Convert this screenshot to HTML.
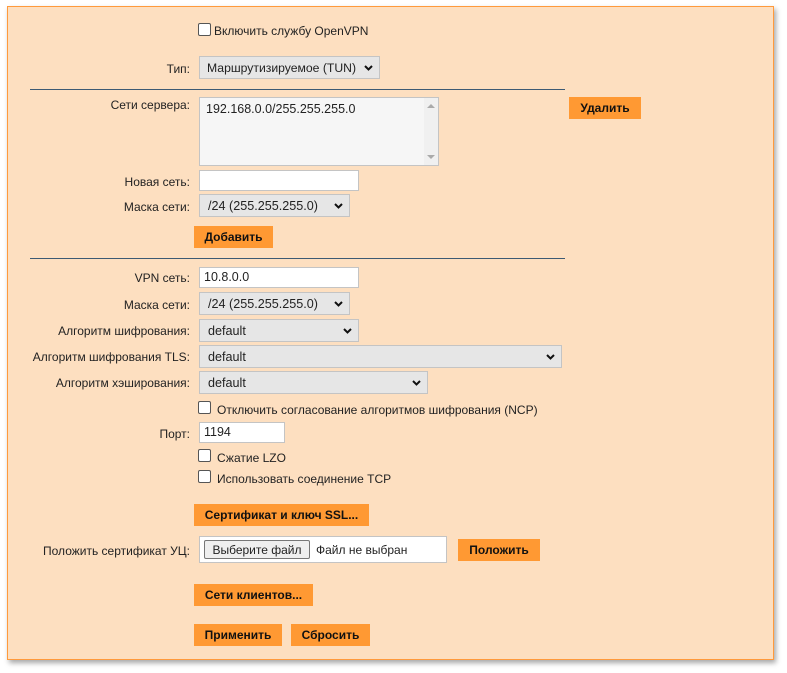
<!DOCTYPE html>
<html><head><meta charset="utf-8"><style>
body{margin:0;background:#fff;width:787px;height:673px;position:relative;font-family:"Liberation Sans",sans-serif;font-size:12px;color:#222;overflow:hidden}
.panel{position:absolute;left:7px;top:6px;width:765px;height:652px;background:#fddfc0;border:1px solid #ff9a3c;box-shadow:2px 3px 5px rgba(0,0,0,.35)}
.a{position:absolute}
.lbl{position:absolute;right:597px;text-align:right;white-space:nowrap;line-height:14px}
.btn{position:absolute;background:#ff9933;font-weight:bold;color:#111;text-align:center;line-height:23px;height:22px;font-size:12px}
.sel{position:absolute;background:#e6e6e6;border:1px solid #c4c4c4;box-sizing:border-box;padding-left:8px;line-height:22px;font-size:12.6px;white-space:nowrap}
.sel svg{position:absolute;right:6px;top:8px}
.inp{position:absolute;background:#fff;border:1px solid #c4c4c4;box-sizing:border-box;padding-left:4px;line-height:19px}
.cb{position:absolute;width:11px;height:11px;border:1px solid #555;border-radius:2px;background:#fff}
hr{position:absolute;left:30px;width:535px;margin:0;border:0;border-top:1px solid #3d5a73}
</style></head><body>
<div class="panel"></div>
<div class="cb" style="left:198px;top:23px"></div><div class="a" style="left:214px;top:24px">Включить службу OpenVPN</div>
<div class="lbl" style="top:62px">Тип:</div>
<div class="sel" style="left:199px;top:56px;width:181px;height:23px;font-size:12.2px;padding-left:7px">Маршрутизируемое (TUN)<svg width="9" height="6"><path d="M1 1l3.5 3.5L8 1" stroke="#111" stroke-width="2" fill="none"/></svg></div>
<hr style="top:89px">
<div class="lbl" style="top:98px">Сети сервера:</div>
<div class="a" style="left:199px;top:97px;width:240px;height:69px;background:#f6f6f6;border:1px solid #c4c4c4;box-sizing:border-box"><div class="a" style="left:6px;top:4px;font-size:12.5px">192.168.0.0/255.255.255.0</div><div class="a" style="right:0;top:0;width:14px;height:67px;background:#f0f0f0"></div><div class="a" style="right:3px;top:6px;border:4px solid transparent;border-bottom-color:#aaa;border-top:0"></div><div class="a" style="right:3px;bottom:6px;border:4px solid transparent;border-top-color:#aaa;border-bottom:0"></div></div>
<div class="btn" style="left:569px;top:97px;width:72px">Удалить</div>
<div class="lbl" style="top:175px">Новая сеть:</div>
<div class="inp" style="left:199px;top:170px;width:160px;height:21px"></div>
<div class="lbl" style="top:200px">Маска сети:</div>
<div class="sel" style="left:199px;top:194px;width:151px;height:23px">/24 (255.255.255.0)<svg width="9" height="6"><path d="M1 1l3.5 3.5L8 1" stroke="#111" stroke-width="2" fill="none"/></svg></div>
<div class="btn" style="left:194px;top:226px;width:79px">Добавить</div>
<hr style="top:258px">
<div class="lbl" style="top:271px">VPN сеть:</div>
<div class="inp" style="left:199px;top:267px;width:160px;height:21px;font-size:12.5px">10.8.0.0</div>
<div class="lbl" style="top:298px">Маска сети:</div>
<div class="sel" style="left:199px;top:292px;width:151px;height:23px">/24 (255.255.255.0)<svg width="9" height="6"><path d="M1 1l3.5 3.5L8 1" stroke="#111" stroke-width="2" fill="none"/></svg></div>
<div class="lbl" style="top:324px">Алгоритм шифрования:</div>
<div class="sel" style="left:199px;top:319px;width:160px;height:23px">default<svg width="9" height="6"><path d="M1 1l3.5 3.5L8 1" stroke="#111" stroke-width="2" fill="none"/></svg></div>
<div class="lbl" style="top:350px">Алгоритм шифрования TLS:</div>
<div class="sel" style="left:199px;top:345px;width:363px;height:23px">default<svg width="9" height="6"><path d="M1 1l3.5 3.5L8 1" stroke="#111" stroke-width="2" fill="none"/></svg></div>
<div class="lbl" style="top:376px">Алгоритм хэширования:</div>
<div class="sel" style="left:199px;top:371px;width:229px;height:23px">default<svg width="9" height="6"><path d="M1 1l3.5 3.5L8 1" stroke="#111" stroke-width="2" fill="none"/></svg></div>
<div class="cb" style="left:198px;top:401px"></div><div class="a" style="left:217px;top:403px">Отключить согласование алгоритмов шифрования (NCP)</div>
<div class="lbl" style="top:427px">Порт:</div>
<div class="inp" style="left:199px;top:422px;width:86px;height:21px;font-size:12.5px">1194</div>
<div class="cb" style="left:198px;top:449px"></div><div class="a" style="left:217px;top:451px">Сжатие LZO</div>
<div class="cb" style="left:198px;top:470px"></div><div class="a" style="left:217px;top:472px">Использовать соединение TCP</div>
<div class="btn" style="left:194px;top:504px;width:175px">Сертификат и ключ SSL...</div>
<div class="lbl" style="top:544px">Положить сертификат УЦ:</div>
<div class="a" style="left:199px;top:536px;width:248px;height:27px;background:#fff;border:1px solid #c4c4c4;box-sizing:border-box"><div class="a" style="left:4px;top:3px;width:106px;height:19px;background:#efefef;border:1px solid #777;border-radius:2px;box-sizing:border-box;text-align:center;line-height:18px">Выберите файл</div><div class="a" style="left:116px;top:6px">Файл не выбран</div></div>
<div class="btn" style="left:458px;top:539px;width:82px">Положить</div>
<div class="btn" style="left:194px;top:584px;width:119px">Сети клиентов...</div>
<div class="btn" style="left:194px;top:624px;width:88px">Применить</div>
<div class="btn" style="left:291px;top:624px;width:79px">Сбросить</div>
</body></html>
